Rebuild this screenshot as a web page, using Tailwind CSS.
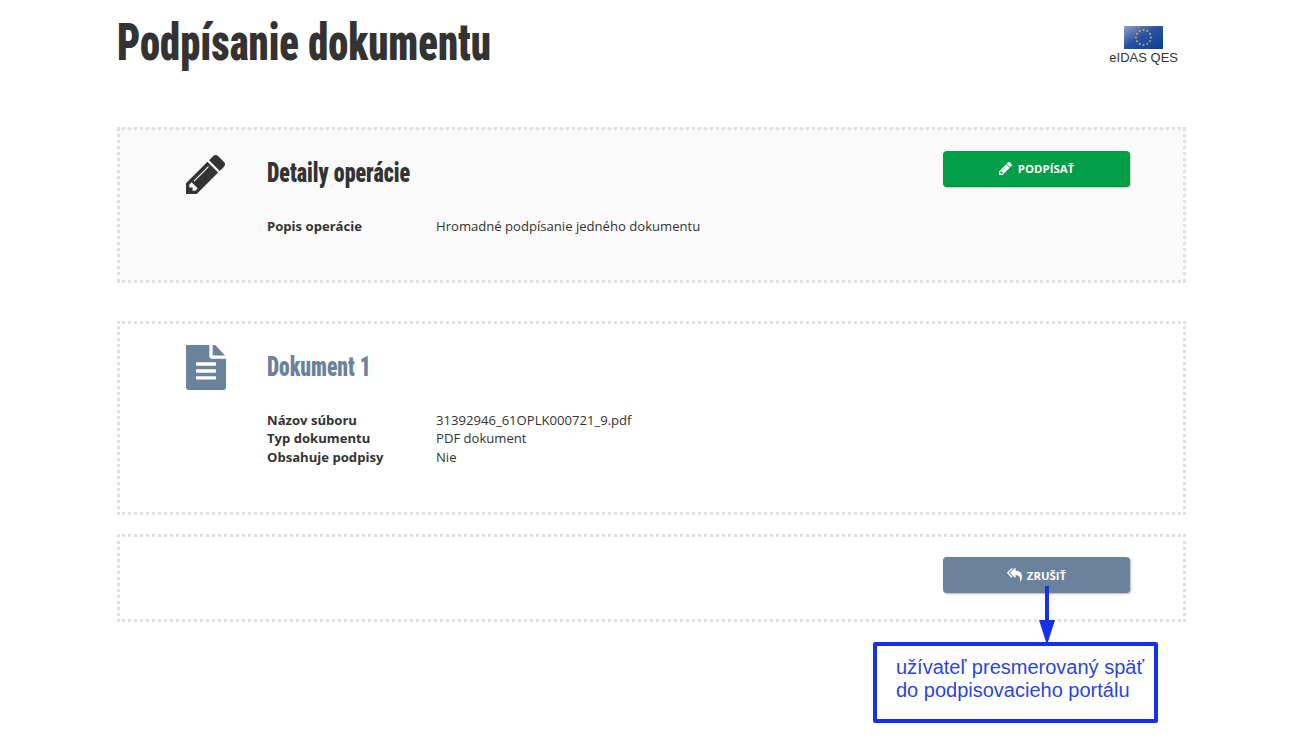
<!DOCTYPE html>
<html lang="sk">
<head>
    <meta charset="UTF-8">
    <title>Podpísanie dokumentu</title>
    <script src="https://cdn.jsdelivr.net/npm/@tailwindcss/browser@4"></script>
</head>
<body class="relative h-[739px] overflow-hidden bg-white font-['Open_Sans',sans-serif] text-[13.1px] text-[#333]">

    <div class="px-[117px] w-[1303px]">
        <!-- Header -->
        <header class="flex justify-between h-[127px]">
            <h1 class="mt-[13px] h-[60px] origin-left scale-x-[0.78] font-['Roboto_Condensed','Liberation_Sans_Narrow',sans-serif] text-[52px] leading-[60px] font-black whitespace-nowrap">Podpísanie dokumentu</h1>
            <div class="mt-[26px] mr-[8px] flex flex-col items-center font-['Liberation_Sans',sans-serif] text-[13px] leading-[16px] text-[#333]">
                <svg class="w-[39px] h-[23px]" viewBox="0 0 39 23">
                    <defs>
                        <linearGradient id="flag" x1="0" y1="0" x2="1" y2="1">
                            <stop offset="0" stop-color="#8ea0c8"/>
                            <stop offset="0.45" stop-color="#2c52a0"/>
                            <stop offset="1" stop-color="#0a3d96"/>
                        </linearGradient>
                    </defs>
                    <rect width="39" height="23" fill="url(#flag)"/>
                    <g fill="#b4b860">
                        <circle cx="19.5" cy="4" r="1"/><circle cx="23.3" cy="5" r="1"/><circle cx="26" cy="7.8" r="1"/>
                        <circle cx="27" cy="11.5" r="1"/><circle cx="26" cy="15.2" r="1"/><circle cx="23.3" cy="18" r="1"/>
                        <circle cx="19.5" cy="19" r="1"/><circle cx="15.7" cy="18" r="1"/><circle cx="13" cy="15.2" r="1"/>
                        <circle cx="12" cy="11.5" r="1"/><circle cx="13" cy="7.8" r="1"/><circle cx="15.7" cy="5" r="1"/>
                    </g>
                </svg>
                <span class="mt-[1px]">eIDAS QES</span>
            </div>
        </header>

        <!-- Detaily operacie -->
        <section class="h-[156px] w-[1069px] border-[3px] border-dotted border-[#e0e0e0] bg-[#fafafa] flex">
            <div class="w-[147px] shrink-0 pt-[25px] pl-[66px]">
                <svg class="w-[39px] h-[39px] fill-[#333]" viewBox="128 149 1515 1515"><path d="M491 1536l91-91-235-235-91 91v107h128v128h107zm523-928q0-22-22-22-10 0-17 7l-542 542q-7 7-7 17 0 22 22 22 10 0 17-7l542-542q7-7 7-17zm-54-192l416 416-832 832h-416v-416zm683 96q0 53-37 90l-166 166-416-416 166-165q36-38 90-38 53 0 91 38l235 234q37 39 37 91z"/></svg>
            </div>
            <div class="flex-1 pt-[25px]">
                <h2 class="h-[36px] origin-left scale-x-[0.785] font-['Roboto_Condensed','Liberation_Sans_Narrow',sans-serif] text-[28px] leading-[36px] font-black whitespace-nowrap text-[#333]">Detaily operácie</h2>
                <dl class="mt-[25.7px] grid grid-cols-[169px_1fr] leading-[18.5px]">
                    <dt class="font-bold">Popis operácie</dt>
                    <dd>Hromadné podpísanie jedného dokumentu</dd>
                </dl>
            </div>
            <div class="pt-[21px] pr-[53px]">
                <button class="flex items-center justify-center gap-[6px] w-[187px] h-[35px] rounded-[4px] bg-[#009e47] shadow-[0_1px_0_#008a40,1px_2px_2px_rgba(0,0,0,0.2)] text-white text-[11.4px] font-bold">
                    <svg class="w-[13px] h-[13px] fill-white" viewBox="128 149 1515 1515"><path d="M491 1536l91-91-235-235-91 91v107h128v128h107zm523-928q0-22-22-22-10 0-17 7l-542 542q-7 7-7 17 0 22 22 22 10 0 17-7l542-542q7-7 7-17zm-54-192l416 416-832 832h-416v-416zm683 96q0 53-37 90l-166 166-416-416 166-165q36-38 90-38 53 0 91 38l235 234q37 39 37 91z"/></svg>
                    PODPÍSAŤ
                </button>
            </div>
        </section>

        <!-- Dokument 1 -->
        <section class="mt-[38px] h-[194px] w-[1069px] border-[3px] border-dotted border-[#e0e0e0] flex">
            <div class="w-[147px] shrink-0 pt-[21px] pl-[66px]">
                <svg class="w-[40px] h-[45px] fill-[#6b829b]" viewBox="128 128 1536 1664" preserveAspectRatio="none"><path d="M1596 476q14 14 28 36h-472v-472q22 14 36 28zm-476 164h544v1056q0 40-28 68t-68 28h-1344q-40 0-68-28t-28-68v-1600q0-40 28-68t68-28h800v544q0 40 28 68t68 28zm160 736v-64q0-14-9-23t-23-9h-704q-14 0-23 9t-9 23v64q0 14 9 23t23 9h704q14 0 23-9t9-23zm0-256v-64q0-14-9-23t-23-9h-704q-14 0-23 9t-9 23v64q0 14 9 23t23 9h704q14 0 23-9t9-23zm0-256v-64q0-14-9-23t-23-9h-704q-14 0-23 9t-9 23v64q0 14 9 23t23 9h704q14 0 23-9t9-23z"/></svg>
            </div>
            <div class="flex-1 pt-[25px]">
                <h2 class="h-[36px] origin-left scale-x-[0.77] font-['Roboto_Condensed','Liberation_Sans_Narrow',sans-serif] text-[28px] leading-[36px] font-black whitespace-nowrap text-[#6b829b]">Dokument 1</h2>
                <dl class="mt-[25.7px] grid grid-cols-[169px_1fr] leading-[18.5px]">
                    <dt class="font-bold">Názov súboru</dt>
                    <dd>31392946_61OPLK000721_9.pdf</dd>
                    <dt class="font-bold">Typ dokumentu</dt>
                    <dd>PDF dokument</dd>
                    <dt class="font-bold">Obsahuje podpisy</dt>
                    <dd>Nie</dd>
                </dl>
            </div>
        </section>

        <!-- Akcie -->
        <section class="mt-[19px] h-[88px] w-[1069px] border-[3px] border-dotted border-[#e0e0e0] flex justify-end pt-[20px] pr-[53px]">
            <button class="flex items-center justify-center gap-[5px] w-[187px] h-[36px] pt-[1px] rounded-[4px] bg-[#6b829b] shadow-[1px_1px_2px_rgba(0,0,0,0.3)] text-white text-[11.4px] font-bold">
                <svg class="w-[15px] h-[14px] fill-white -mt-[2px]" viewBox="0 128 1792 1536"><path d="M640 1082v70q0 42-39 59-13 5-25 5-27 0-45-19l-512-512q-19-19-19-45t19-45l512-512q29-31 70-14 39 17 39 59v69l-397 398q-19 19-19 45t19 45zm1152 38q0 58-17 133.5t-38.5 138-48 125-40.5 90.5l-20 40q-8 17-28 17-6 0-9-1-25-8-23-34 43-400-106-565-64-71-170.5-110.5t-267.5-52.5v251q0 42-39 59-13 5-25 5-27 0-45-19l-512-512q-19-19-19-45t19-45l512-512q29-31 70-14 39 17 39 59v262q411 28 599 221 169 173 169 509z"/></svg>
                ZRUŠIŤ
            </button>
        </section>
    </div>

    <!-- Annotation over the page -->
    <svg class="absolute left-[1035px] top-[586px] w-[24px] h-[60px]" viewBox="0 0 24 60">
        <rect x="10" y="0" width="4" height="36" fill="#1530e8"/>
        <path d="M4 34h16l-8 25z" fill="#1530e8"/>
    </svg>
    <div class="absolute left-[873px] top-[642px] w-[285px] h-[81px] border-[4px] border-[#1530e8] rounded-[2px] bg-white pt-[10px] pl-[19px] font-['Liberation_Sans',sans-serif] text-[20px] leading-[23px] text-[#2a45e6]">
        užívateľ presmerovaný späť<br>do podpisovacieho portálu
    </div>
</body>
</html>
